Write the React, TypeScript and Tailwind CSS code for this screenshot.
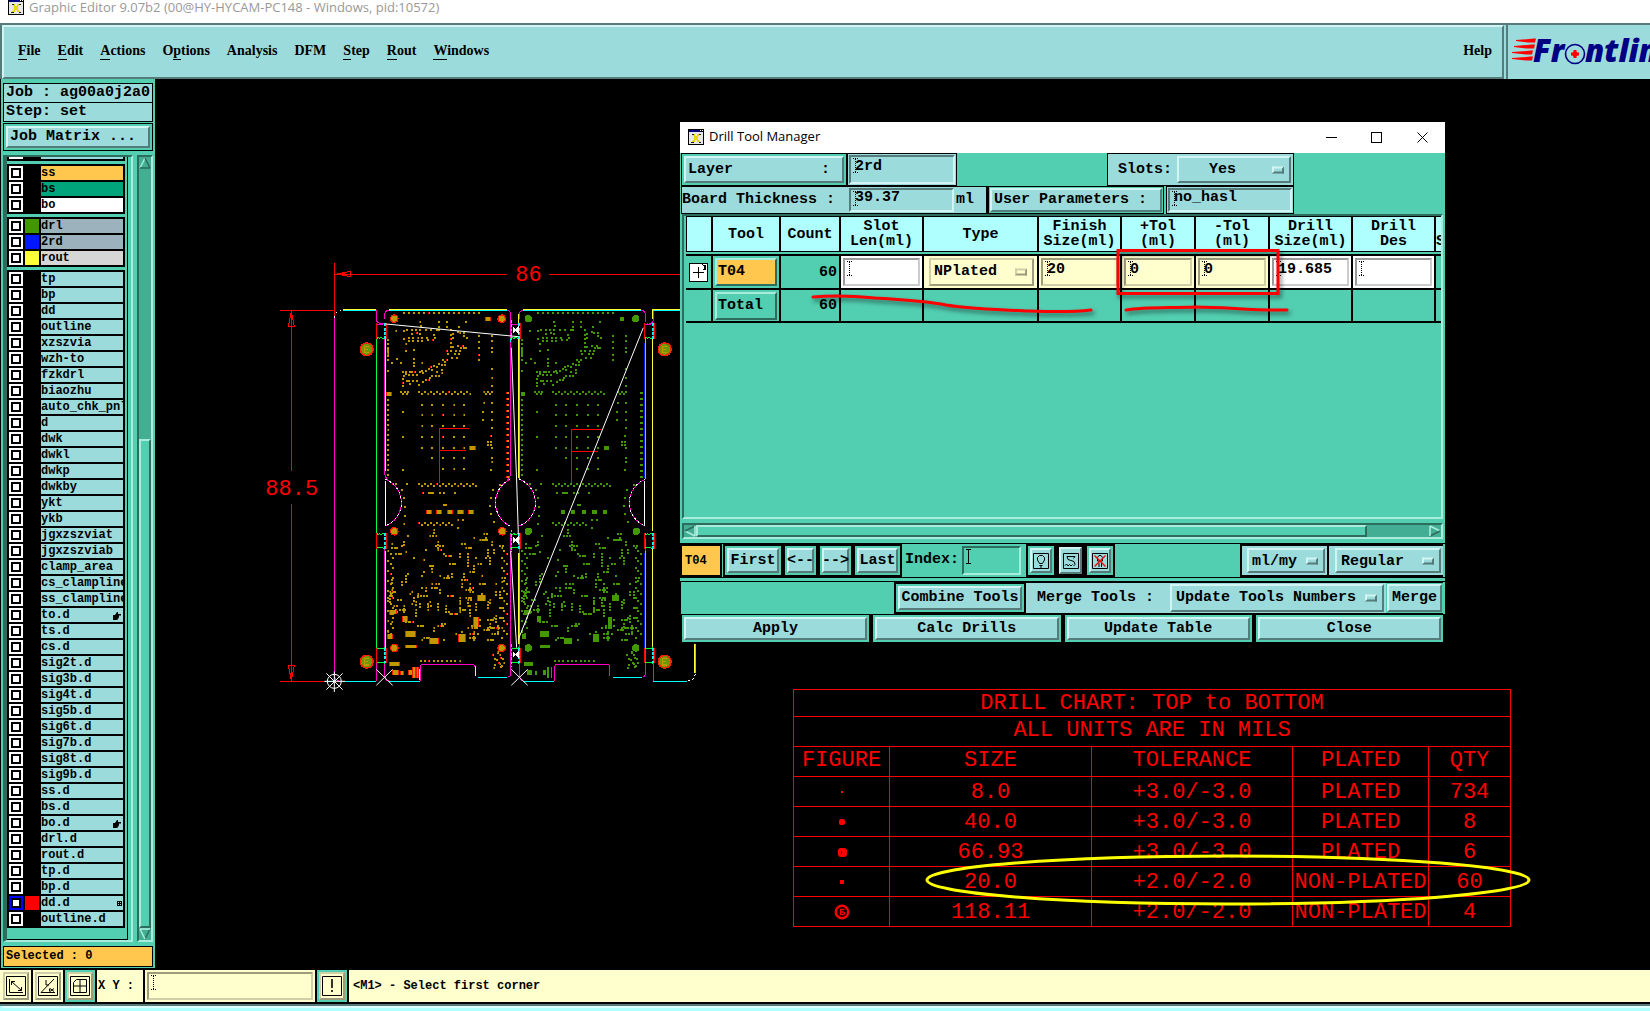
import React from "react";

const MONO = "font-['Liberation_Mono',monospace] font-bold";
const RAISED =
  "border-2 border-t-[#d2f4f4] border-l-[#d2f4f4] border-r-[#557b7b] border-b-[#557b7b] bg-[#9cdbdb]";
const SUNKEN =
  "border-2 border-t-[#557b7b] border-l-[#557b7b] border-r-[#d2f4f4] border-b-[#d2f4f4] bg-[#9cdbdb]";
const RAISED_TEAL =
  "border-2 border-t-[#a9ecdb] border-l-[#a9ecdb] border-r-[#2c6d5d] border-b-[#2c6d5d]";
const SUNKEN_TEAL =
  "border-2 border-t-[#2c6d5d] border-l-[#2c6d5d] border-r-[#a9ecdb] border-b-[#a9ecdb]";
const SUNKEN_CREAM =
  "border-2 border-t-[#9c9c7c] border-l-[#9c9c7c] border-r-[#cfcfa8] border-b-[#cfcfa8] bg-[#ffffce]";
const RAISED_CREAM =
  "border-2 border-t-[#cfcfa8] border-l-[#cfcfa8] border-r-[#9c9c7c] border-b-[#9c9c7c] bg-[#ffffce]";
const SUNKEN_WHITE =
  "border-2 border-t-[#9a9a9a] border-l-[#9a9a9a] border-r-[#cccccc] border-b-[#cccccc] bg-white";

function WindowIcon() {
  return (
    <svg width="16" height="16" viewBox="0 0 16 16" shapeRendering="crispEdges" className="shrink-0">
      <rect width="16" height="16" fill="#000" />
      <rect x="1" y="1" width="10" height="2" fill="#000084" />
      <rect x="12" y="1" width="1" height="1" fill="#fff" />
      <rect x="14" y="1" width="1" height="1" fill="#fff" />
      <rect x="1" y="3" width="14" height="12" fill="#e8e8e8" />
      <path d="M5 5l6 8M11 5l-6 8" stroke="#e8d800" strokeWidth="2" />
      <path d="M4 5.500h2M11 5.500h2M3 13.500h3M11 13.500h2" stroke="#222" strokeWidth="1" />
    </svg>
  );
}

function Caret({ solid = false }: { solid?: boolean }) {
  return (
    <svg
      width="5"
      height="15"
      viewBox="0 0 5 15"
      shapeRendering="crispEdges"
      className="pointer-events-none absolute left-1 top-[3px]"
    >
      <path d="M0 .5h5M0 14.5h5" stroke="#000" strokeDasharray={solid ? "5" : "1 1"} />
      <path d="M2.5 1v13" stroke="#000" strokeDasharray={solid ? "13" : "1 1"} />
    </svg>
  );
}

function Field({
  label,
  value = "",
  bevel,
  className = "",
  solid,
}: {
  label: string;
  value?: string;
  bevel: string;
  className?: string;
  solid?: boolean;
}) {
  return (
    <span className={`relative block ${className}`}>
      <input
        aria-label={label}
        defaultValue={value}
        className={`${bevel} ${MONO} block h-full w-full pb-[6px] pl-[4px] text-[15px] leading-4 outline-none`}
      />
      <Caret solid={solid} />
    </span>
  );
}

function Option({
  label,
  value,
  bevel = RAISED,
  className = "",
  pad = "pl-[6px]",
  cream = false,
}: {
  label: string;
  value: string;
  bevel?: string;
  className?: string;
  pad?: string;
  cream?: boolean;
}) {
  return (
    <span className={`relative block ${className}`}>
      <select
        aria-label={label}
        defaultValue={value}
        className={`${bevel} ${pad} ${MONO} block h-full w-full appearance-none pt-px text-[15px] outline-none`}
      >
        <option>{value}</option>
      </select>
      <span
        className={`${cream ? RAISED_CREAM : RAISED} pointer-events-none absolute right-[7px] top-1/2 h-[7px] w-[12px] -translate-y-1/2`}
      />
    </span>
  );
}

function PushButton({
  children,
  className = "",
  label,
}: {
  children: React.ReactNode;
  className?: string;
  label?: string;
}) {
  return (
    <span className={`block border-2 border-black bg-[#52ceb0] p-[2px] ${className}`}>
      <button
        type="button"
        aria-label={label}
        className={`${RAISED} ${MONO} flex h-full w-full items-center justify-center whitespace-pre pt-px text-[15px]`}
      >
        {children}
      </button>
    </span>
  );
}

const MENUS: [string, number][] = [
  ["File", 0],
  ["Edit", 0],
  ["Actions", 0],
  ["Options", 1],
  ["Analysis", -1],
  ["DFM", -1],
  ["Step", 0],
  ["Rout", 0],
  ["Windows", 0],
];

function MenuLabel({ text, at }: { text: string; at: number }) {
  if (at < 0) return <>{text}</>;
  return (
    <>
      {text.slice(0, at)}
      <span className="border-b border-black pb-px">{text[at]}</span>
      {text.slice(at + 1)}
    </>
  );
}

function Logo() {
  return (
    <svg width="144" height="48" viewBox="0 0 144 48" className="block overflow-hidden">
      <g fill="#ff0000">
        <path d="M8 15l13-1 5-.5h2l-1 4h-7l-12-1.500z" />
        <path d="M6 21l13-1 5-.5h3l-1 4h-7l-13-1.500z" />
        <path d="M4 27l14-1 5-.5h2l-1 4h-6l-14-1.500z" />
        <path d="M4 33l14-1 4-.5h3l-1 4h-6l-14-1.500z" />
      </g>
      <g
        fill="#000084"
        fontFamily="Open Sans, Liberation Sans, sans-serif"
        fontWeight="800"
        fontStyle="italic"
        fontSize="31"
      >
        <text x="25" y="37">
          Fr
        </text>
        <text x="77" y="37">
          ntline
        </text>
      </g>
      <circle cx="67" cy="29" r="9.5" fill="#9cdbdb" stroke="#000084" strokeWidth="1.600" />
      <path d="M67 25v8M63 29h8" stroke="#f00" strokeWidth="3" />
      <circle cx="67" cy="29" r="2.600" fill="#f00" />
    </svg>
  );
}

type Layer = { name: string; bg?: string; swatch?: string; mark?: "hand" | "grid"; active?: boolean };

const GROUP_A: Layer[] = [
  { name: "ss", bg: "bg-[#ffc74e]" },
  { name: "bs", bg: "bg-[#00a57b]" },
  { name: "bo", bg: "bg-white" },
];
const GROUP_B: Layer[] = [
  { name: "drl", bg: "bg-[#9cb3bd]", swatch: "bg-[#429800]" },
  { name: "2rd", bg: "bg-[#9cb3bd]", swatch: "bg-[#0018ff]" },
  { name: "rout", bg: "bg-[#d6d6d6]", swatch: "bg-[#ffff39]" },
];
const GROUP_C: Layer[] = [
  ..."tp bp dd outline xzszvia wzh-to fzkdrl biaozhu auto_chk_pnl d dwk dwkl dwkp dwkby ykt ykb jgxzszviat jgxzszviab clamp_area cs_clampline ss_clampline"
    .split(" ")
    .map((name) => ({ name })),
  { name: "to.d", mark: "hand" },
  ..."ts.d cs.d sig2t.d sig3b.d sig4t.d sig5b.d sig6t.d sig7b.d sig8t.d sig9b.d ss.d bs.d"
    .split(" ")
    .map((name) => ({ name })),
  { name: "bo.d", mark: "hand" },
  ..."drl.d rout.d tp.d bp.d".split(" ").map((name) => ({ name })),
  { name: "dd.d", mark: "grid", swatch: "bg-[#ff0000]", active: true },
  { name: "outline.d" },
];

function LayerRow({ layer }: { layer: Layer }) {
  return (
    <label className="flex h-[14px] gap-[2px]">
      <span
        className={`flex h-[14px] w-[14px] shrink-0 items-center justify-center ${layer.active ? "bg-[#0000ff]" : "bg-white"}`}
      >
        <input
          type="checkbox"
          className="block h-[10px] w-[10px] appearance-none border-2 border-black bg-white"
        />
      </span>
      <span className={`w-[14px] shrink-0 ${layer.swatch ?? ""}`} />
      <span
        className={`${MONO} relative min-w-0 flex-1 overflow-hidden whitespace-nowrap text-[12px] leading-[14px] ${layer.bg ?? "bg-[#9cdbdb]"}`}
      >
        {layer.name}
        {layer.mark === "hand" && (
          <svg width="8" height="8" viewBox="0 0 8 8" className="absolute right-[2px] top-1">
            <path d="M0 3h2l2-3h1v2h3v1.500H6V5l-1 2-1 1H0z" />
          </svg>
        )}
        {layer.mark === "grid" && (
          <svg
            width="5"
            height="5"
            viewBox="0 0 5 5"
            shapeRendering="crispEdges"
            className="absolute right-[1px] top-[5px]"
          >
            <path d="M.5.5h4v4h-4zM2.5 0v5M0 2.5h5" fill="none" stroke="#000" />
          </svg>
        )}
      </span>
    </label>
  );
}

function LayerGroup({ layers }: { layers: Layer[] }) {
  return (
    <div className="flex flex-col gap-[2px] border-2 border-black bg-black">
      {layers.map((l) => (
        <LayerRow key={l.name} layer={l} />
      ))}
    </div>
  );
}

function Arrow({ dir }: { dir: "up" | "down" | "left" | "right" }) {
  const turn = { up: 0, right: 90, down: 180, left: 270 }[dir];
  return (
    <svg width="12" height="12" viewBox="0 0 12 12" className="block shrink-0">
      <g transform={`rotate(${turn} 6 6)`} fill="none" strokeWidth="1.6">
        <path d="M1 11L6 1" stroke={dir === "down" ? "#2c6d5d" : "#a9ecdb"} />
        <path d="M6 1l5 10" stroke={dir === "down" ? "#a9ecdb" : "#2c6d5d"} />
        <path d="M1 11h10" stroke={dir === "up" ? "#2c6d5d" : "#a9ecdb"} />
      </g>
    </svg>
  );
}

function Sidebar() {
  return (
    <aside className="ml-px flex w-[154px] shrink-0 flex-col bg-[#52ceb0] pb-px pl-[2px] pr-[2px] pt-1">
      <div className={`${MONO} border border-black bg-[#9cdbdb] text-[15px]`}>
        <div className="h-[18px] overflow-hidden whitespace-pre pl-[2px] leading-[18px]">Job : ag00a0j2a0</div>
        <div className="h-[19px] whitespace-pre border-t border-black pl-[2px] leading-[18px]">Step: set</div>
      </div>
      <div className="mt-px border border-black p-[2px]">
        <button
          type="button"
          className={`${RAISED} ${MONO} block h-[22px] w-full whitespace-pre pl-[2px] text-left text-[15px] leading-[18px]`}
        >
          Job Matrix ...
        </button>
      </div>
      <div className="mt-1 flex">
        <div className="flex w-[130px] border-2 border-l-4 border-b-[#a9ecdb] border-l-[#2c6d5d] border-r-[#a9ecdb] border-t-[#2c6d5d] pr-[3px]">
          <div className="flex min-w-0 flex-1 flex-col gap-[3px] border-b border-r border-black pb-[11px] pr-[2px]">
            <div className="flex h-1 gap-[2px] border-2 border-t-0 border-black bg-black">
              <span className="w-[14px] bg-white" />
              <span className="w-[14px]" />
              <span className="flex-1 bg-[#9cdbdb]" />
            </div>
            <LayerGroup layers={GROUP_A} />
            <LayerGroup layers={GROUP_B} />
            <LayerGroup layers={GROUP_C} />
          </div>
        </div>
        <div className={`${SUNKEN_TEAL} ml-1 flex w-4 flex-col items-center bg-[#44ae95]`}>
          <Arrow dir="up" />
          <div className="h-[270px]" />
          <div className={`${RAISED_TEAL} w-full flex-1 bg-[#52ceb0]`} />
          <Arrow dir="down" />
        </div>
      </div>
      <div
        className={`${MONO} mt-1 h-[21px] whitespace-pre border border-black bg-[#ffc74e] pl-[2px] text-[12px] leading-[18px]`}
      >
        Selected : 0
      </div>
    </aside>
  );
}

/* Board artwork: coordinates are in thirds of a pixel. */
type Dot = [number, number, number?, number?, boolean?];

function span(from: number, to: number, step: number, fn: (v: number, i: number) => Dot): Dot[] {
  const out: Dot[] = [];
  for (let v = from, i = 0; v <= to; v += step, i++) out.push(fn(v, i));
  return out;
}

const LOOSE =
  "480,212 537,212 561,212 617,212 482,226 537,228 560,228 408,240 433,239 442,237 457,237 469,237 481,237 497,237 470,247 457,249 481,248 433,265 446,270 446,262 460,262 474,262 487,262 500,262 460,270 474,270 487,270 504,268 520,268 523,252 526,262 538,238 530,238 512,238 596,228 600,245 611,245 611,255 594,242 573,238 573,252 579,250 573,264 579,262 573,276 573,288 579,288 594,284 602,290 608,286 617,290 620,260 611,292 588,300 600,300 596,308 562,300 572,300 564,308 585,310 577,320 590,320 548,328 560,328 554,334 538,340 546,342 554,343 522,345 530,348 514,348 506,354 516,356 498,360 486,360 490,367 546,358 545,366 532,364 528,374 538,376 517,376 510,382 498,388 506,388 490,394 477,402 430,363 438,363 449,363 455,362 464,363 432,374 438,370 446,372 458,372 470,372 430,384 430,395 440,390 448,390 460,390 472,390 450,398 430,405 438,278 438,300 463,297 463,325 463,335 463,345 479,363 485,335 411,325 424,335 397,336 656,256 656,274 656,290 656,311 656,328 697,254 697,270 697,290 697,302 697,355 697,380 697,405 384,267 384,280 384,292 384,298 384,304 384,310 384,316 384,328 384,360 430,482 430,558 430,656 671,457 697,457 669,483 669,507 697,483 697,507 697,531 692,555 684,573 692,573 684,582 692,582 697,590 697,620 697,632 692,656 517,621 549,621 582,621 613,621 549,654 582,654 613,654 423,423 428,429 434,423 440,429 445,423 672,423 677,429 683,423 689,429 697,423 551,761 559,761 594,807 610,807 408,700 425,716 433,740 436,768 434,795 432,818 720,702 700,716 692,740 690,766 694,790 702,812 488,726 506,726 512,726 518,726 540,726 551,726 584,726 398,700 440,700";

function buildDots(): Dot[] {
  const dots: Dot[] = LOOSE.split(" ").map((p) => {
    const [x, y] = p.split(",").map(Number);
    return [x, y];
  });
  dots.push(...span(432, 665, 15, (x) => [x, 186]));
  dots.push(...span(477, 630, 9, (x, i) => [x, i % 2 ? 429 : 423]));
  dots.push(...span(448, 680, 15, (y) => [384, y]));
  dots.push(...span(426, 680, 18, (y) => [741, y, 8, 6, true]));
  for (const y of [462, 493, 525, 558, 590])
    for (const x of [486, 517, 549, 582, 613]) dots.push([x, y, 6, 6, y === 493]);
  dots.push(...span(477, 648, 9, (x, i) => [x, i % 2 ? 705 : 699]));
  dots.push(...span(477, 580, 9, (x, i) => [x, i % 2 ? 821 : 815]));
  dots.push(...span(482, 610, 13, (x) => [x, 1230]));
  let s = 7;
  const next = () => (s = (s * 16807) % 2147483647) / 2147483647;
  for (let i = 0; i < 165; i++) {
    const x = 384 + Math.round(next() * 58) * 6;
    const y = 832 + Math.round(next() * 56) * 6;
    const n = 1 + Math.floor(next() * 3);
    const flat = next() > 0.45;
    const hot = next() > 0.6;
    if (y < 870 && (x < 425 || x > 690)) continue;
    if (y > 1160 && (x < 425 || x > 690)) continue;
    for (let k = 0; k < n; k++)
      dots.push([Math.min(x + (flat ? k * 8 : 0), 742), y + (flat ? 0 : k * 9), 6, 6, hot && k === 0]);
  }
  for (let i = 0; i < 26; i++) dots.push([384 + (i % 3) * 8, 900 + i * 10]);
  for (let i = 0; i < 28; i++) dots.push([726 + (i % 3) * 7, 890 + i * 10, 6, 6, i % 4 === 0]);
  for (let i = 0; i < 16; i++)
    dots.push([686 + Math.round(next() * 50), 1204 + Math.round(next() * 48), 6, 6, i % 2 === 0]);
  return dots;
}

const DOTS = buildDots();
const PADS: [number, number, number, number][] = [
  [684, 204, 14, 14],
  [387, 429, 14, 14],
  [638, 592, 14, 12],
  [507, 783, 13, 14],
  [537, 783, 13, 14],
  [570, 783, 13, 14],
  [601, 783, 13, 14],
  [633, 783, 13, 14],
  [665, 1040, 20, 18],
  [400, 1083, 18, 10],
  [435, 1103, 14, 18],
  [648, 1112, 11, 30],
  [390, 1157, 14, 14],
  [452, 1149, 26, 18],
  [522, 1170, 26, 16],
  [605, 1160, 18, 24],
  [454, 1187, 30, 10],
  [404, 1239, 26, 10],
  [406, 1265, 14, 16],
  [426, 1266, 6, 12],
  [452, 1265, 8, 14],
  [463, 1265, 6, 34],
  [472, 1265, 5, 34],
];
const HOLES: [number, number][] = [
  [403, 203],
  [725, 203],
  [403, 841],
  [727, 841],
  [403, 1191],
  [725, 1191],
];

function Components({ plain, dx }: { plain?: boolean; dx: number }) {
  const base = plain ? "#429800" : "#c09800";
  return (
    <g transform={`translate(${dx} 0)`}>
      {DOTS.map(([x, y, w = 6, h = 6, hot], i) => (
        <g key={i}>
          <rect x={x - 3} y={y - 3} width={w} height={h} fill={base} />
          {!plain && (hot || i % 7 === 0) && <rect x={x - 3} y={y - 3} width="3" height={h} fill="#ff0000" />}
        </g>
      ))}
      {PADS.map(([x, y, w, h], i) => (
        <g key={i}>
          {!plain && <rect x={x - w / 2 - 3} y={y - h / 2} width={w + 6} height={h} fill="#ff1800" />}
          <rect x={x - w / 2} y={y - h / 2} width={w} height={h} fill={base} />
        </g>
      ))}
      {HOLES.map(([x, y], i) => (
        <circle
          key={i}
          cx={x}
          cy={y}
          r="11"
          fill={base}
          stroke={plain ? base : "#ff1800"}
          strokeWidth={plain ? 0 : 4}
        />
      ))}
    </g>
  );
}

function Tab({ x, y, bow }: { x: number; y: number; bow?: boolean }) {
  return (
    <g fill="none" strokeWidth="3">
      <path d={`M${x} ${y}q4 6 10 2q4 4 16-2`} stroke={y < 300 ? "#ff00c8" : "#00ff39"} />
      <path d={`M${x} ${y + 47}q4-6 10-2q4-4 16 2`} stroke="#00ff39" />
      <path d={`M${x + 1} ${y}v47M${x + 29} ${y}v47`} stroke="#ff0000" />
      <path d={`M${x + 25} ${y}v47`} stroke="#00ffff" strokeWidth="5" strokeDasharray="9 4" />
      <path d={`M${x + 27} ${y + 4}v40`} stroke="#00ff39" strokeWidth="4" strokeDasharray="5 8" />
      {bow && (
        <>
          <path d={`M${x + 2} ${y - 10}v67`} stroke="#00ffff" strokeWidth="5" strokeDasharray="8 5" />
          <path d={`M${x + 7} ${y + 13}l15 15v-15l-15 15z`} fill="#fff" stroke="#fff" />
        </>
      )}
    </g>
  );
}

function BoardDrawing() {
  return (
    <svg
      viewBox="0 0 1350 1350"
      className="absolute left-[105px] top-[172px] h-[450px] w-[450px]"
      fill="none"
      strokeWidth="3"
      shapeRendering="crispEdges"
      role="img"
      aria-label="Panel layout"
    >
      <g stroke="#ff0000">
        <path d="M223 36V195M223 70H741M867 70H1260M60 178H219M94 178V660M94 760V1290M60 1291H195" />
        <path d="M232 69l40-8v16z M85 227l9-45 9 45z M85 1243l9 45 9-45z" />
        <path d="M232 69l22-4v8zM91 200l3-18 4 18zM91 1266l3 22 4-22z" fill="#f00" />
        <path d="M538 692V532H627M538 598H618M538 660V696M935 698V535H1027M935 601H1014" />
      </g>
      <g
        fill="#ff0000"
        stroke="none"
        fontFamily="Liberation Mono, monospace"
        fontSize="66"
        shapeRendering="auto"
      >
        <text x="766" y="90">
          86
        </text>
        <text x="16" y="732">
          88.5
        </text>
      </g>

      <Components dx={0} />
      <Components dx={402} plain />

      <g stroke="#ff00c8">
        <path d="M223 195V1270q0 20 20 21M349 178V205q0 10 12 12h12M349 1180V1290M374 1240V1270q0 20 14 20" />
        <path d="M374 265V660q0 20 10 27M752 190V660q0 20-10 27M752 845V1270q0 8-8 8M374 890V1190M778 845V1270q0 20 12 20" />
        <path d="M374 205v-12q0-14 12-16M740 177q12 2 12 16M778 205v-12q0-14 12-16M1144 177q12 2 12 16v20M1180 178v25q0 14-14 14" />
        <path d="M376 685A75 75 0 0 1 376 825M750 685A78 78 0 0 0 750 825M778 685A75 75 0 0 1 778 825M1156 685A75 75 0 0 0 1156 825" />
        <path d="M481 1290V1250q0-10 8-10H636q9 0 9 9V1275M884 1290V1250q0-10 8-10H1040q9 0 9 9V1275M1156 860V1268q0 8-8 10M1180 1200V1290" />
      </g>
      <path
        d="M376 685A75 75 0 0 1 376 825M750 685A78 78 0 0 0 750 825M778 685A75 75 0 0 1 778 825M1156 685A75 75 0 0 0 1156 825M223 200q2-20 22-22M1284 1290q20 0 22-24"
        stroke="#fff"
        strokeDasharray="5 9"
      />
      <g stroke="#ffff39">
        <path d="M249 175H349M386 175H740M790 175H1144M1180 175H1260M775 265V680M775 905V1180M1178 175V205M1178 265V840M1178 890V1190M478 1255V1288M646 1245V1275M1303 1180V1265M775 190V215" />
      </g>
      <g stroke="#00ffff">
        <path d="M249 178H349M386 178H740M790 178H1144M1180 178H1260M249 1290H349M388 1290H480M655 1278H740M790 1290H882M1058 1278H1145M1180 1290H1282M195 1291H223" />
        <path d="M778 265V685M778 905V1180M1156 265V685M1156 900V1190M752 262v10M1306 1180v85" />
      </g>
      <path d="M1153 275V680M1153 905V1190" stroke="#0018ff" />
      <path d="M377 265V660M376 690V825M1153 690V825M377 900V1190" stroke="#fff" />
      <path d="M349 265V850M349 895V1190" stroke="#00ff39" />
      <path d="M1181 217V265M1181 845V895M1181 1190V1240" stroke="#ff0000" />

      {[217, 846, 1190].map((y) => (
        <g key={y}>
          <Tab x={349} y={y} />
          <Tab x={752} y={y} bow />
          <Tab x={1153} y={y} />
        </g>
      ))}

      <g stroke="#fff" shapeRendering="auto" strokeWidth="3">
        <path d="M378 219L775 257M754 290L770 690L775 850M752 900L770 1190M1150 230L775 1165" />
        <circle cx="223" cy="1291" r="21" />
        <path d="M223 1261v62M193 1291h62M199 1267l49 49M248 1267l-49 49M349 1255l49 48M398 1255l-49 48M754 1255l49 48M803 1255l-49 48" />
      </g>

      {[
        [320, 295],
        [1214, 295],
        [320, 1232],
        [1214, 1232],
      ].map(([x, y]) => (
        <g key={`${x}-${y}`}>
          <circle cx={x} cy={y} r="19" fill="#6f9800" stroke="#ff2000" strokeWidth="5" />
          <path
            d={`M${x + 7} ${y - 9}h-13v19h13M${x - 6} ${y}h10`}
            stroke="#c09800"
            strokeWidth="4"
          />
        </g>
      ))}
    </svg>
  );
}

const CHART = [
  ["8.0", "+3.0/-3.0", "PLATED", "734"],
  ["40.0", "+3.0/-3.0", "PLATED", "8"],
  ["66.93", "+3.0/-3.0", "PLATED", "6"],
  ["20.0", "+2.0/-2.0", "NON-PLATED", "60"],
  ["118.11", "+2.0/-2.0", "NON-PLATED", "4"],
];

function Figure({ kind }: { kind: number }) {
  return (
    <svg width="16" height="16" viewBox="0 0 16 16" className="mx-auto block" fill="#f00">
      {kind === 0 && <rect x="7" y="7" width="2" height="2" />}
      {kind === 1 && <rect x="5" y="5" width="6" height="6" rx="2" />}
      {kind === 2 && (
        <>
          <rect x="4" y="4" width="9" height="9" rx="3" />
          <path d="M7.500 7v3" stroke="#000" />
        </>
      )}
      {kind === 3 && <rect x="6" y="6" width="4" height="4" />}
      {kind === 4 && (
        <>
          <circle cx="8" cy="8" r="6.200" fill="none" stroke="#f00" strokeWidth="2.400" />
          <path d="M10.500 5.500h-4v5h4M6.500 8h3.500M10.500 8v2" fill="none" stroke="#f00" strokeWidth="1.300" />
        </>
      )}
    </svg>
  );
}

const CHART_CELL = "h-[30px] border border-[#f00] p-0 text-center font-normal leading-none";

function DrillChart() {
  return (
    <div className="absolute left-[638px] top-[610px] w-[718px]">
      <table className="w-full table-fixed border-collapse whitespace-nowrap font-['Liberation_Mono',monospace] text-[22px] text-[#f00]">
        <colgroup>
          <col className="w-[96px]" />
          <col className="w-[202px]" />
          <col className="w-[201px]" />
          <col className="w-[136px]" />
          <col />
        </colgroup>
        <thead>
          <tr>
            <th colSpan={5} className="h-[27px] border border-[#f00] p-0 pt-px font-normal leading-none">
              DRILL CHART: TOP to BOTTOM
            </th>
          </tr>
          <tr>
            <th colSpan={5} className={`${CHART_CELL} pb-[2px]`}>
              ALL UNITS ARE IN MILS
            </th>
          </tr>
          <tr>
            {["FIGURE", "SIZE", "TOLERANCE", "PLATED", "QTY"].map((h) => (
              <th key={h} className={`${CHART_CELL} pb-[2px]`}>
                {h}
              </th>
            ))}
          </tr>
        </thead>
        <tbody>
          {CHART.map((row, i) => (
            <tr key={i}>
              <td className={CHART_CELL}>
                <Figure kind={i} />
              </td>
              {row.map((c, j) => (
                <td key={j} className={`${CHART_CELL} pt-[2px]`}>
                  {c}
                </td>
              ))}
            </tr>
          ))}
        </tbody>
      </table>
      <svg
        width="610"
        height="60"
        viewBox="0 0 610 60"
        fill="none"
        className="pointer-events-none absolute left-[131px] top-[161px]"
      >
        <ellipse cx="304" cy="30" rx="301" ry="24" stroke="#ffff00" strokeWidth="3" />
      </svg>
    </div>
  );
}

const HEADERS = [
  "",
  "Tool",
  "Count",
  "Slot\nLen(ml)",
  "Type",
  "Finish\nSize(ml)",
  "+Tol\n(ml)",
  "-Tol\n(ml)",
  "Drill\nSize(ml)",
  "Drill\nDes",
  "\nS",
];
const TD = "border-b-2 border-r-2 border-black p-0";

function ToolTable() {
  return (
    <table className={`${MONO} w-full table-fixed border-separate border-spacing-0 text-[15px]`}>
      <colgroup>
        <col className="w-[27px]" />
        <col className="w-[68px]" />
        <col className="w-[60px]" />
        <col className="w-[83px]" />
        <col className="w-[115px]" />
        <col className="w-[83px]" />
        <col className="w-[74px]" />
        <col className="w-[74px]" />
        <col className="w-[83px]" />
        <col className="w-[83px]" />
        <col />
      </colgroup>
      <thead>
        <tr>
          {HEADERS.map((h, i) => (
            <th
              key={i}
              className={`h-[36px] overflow-hidden whitespace-pre border-y border-black bg-[#b0ffff] p-0 leading-[15px] ${i < 10 ? "border-r-2" : ""} ${i === 0 ? "border-l" : ""}`}
            >
              {h}
            </th>
          ))}
        </tr>
        <tr aria-hidden="true">
          <td colSpan={11} className="h-1 border-b-2 border-black p-0 leading-none" />
        </tr>
      </thead>
      <tbody>
        <tr className="h-[34px]">
          <td className={TD}>
            <button type="button" aria-label="Expand tool" className="mx-auto block">
              <svg width="19" height="19" viewBox="0 0 19 19" shapeRendering="crispEdges">
                <path
                  d="M.5.5h18v18H.5zM4 9.500h11M9.500 4v11M13.500 0v2M13.500 2.500h3v4h-3M15.500 2v4"
                  fill="#fff"
                  stroke="#000"
                />
              </svg>
            </button>
          </td>
          <td className={TD}>
            <button
              type="button"
              className={`${RAISED_TEAL} mx-auto block h-[28px] w-[62px] bg-[#ffc74e] pl-px pt-px text-left`}
            >
              T04
            </button>
          </td>
          <td className={`${TD} pr-[2px] pt-[2px] text-right`}>60</td>
          <td className={`${TD} bg-white`}>
            <Field label="Slot length" bevel={SUNKEN_WHITE} className="mx-[2px] h-[28px]" />
          </td>
          <td className={`${TD} bg-[#ffffce]`}>
            <Option
              label="Type"
              value="NPlated"
              bevel={RAISED_CREAM}
              cream
              pad="pl-[3px]"
              className="ml-[5px] mr-[3px] h-[28px]"
            />
          </td>
          <td className={`${TD} bg-[#ffffce]`}>
            <Field label="Finish size" value="20" bevel={SUNKEN_CREAM} className="mx-[2px] h-[28px]" />
          </td>
          <td className={`${TD} bg-[#ffffce]`}>
            <Field label="Plus tolerance" value="0" bevel={SUNKEN_CREAM} className="mx-[2px] h-[28px]" />
          </td>
          <td className={`${TD} bg-[#ffffce]`}>
            <Field label="Minus tolerance" value="0" bevel={SUNKEN_CREAM} className="mx-[2px] h-[28px]" />
          </td>
          <td className={`${TD} bg-white`}>
            <Field label="Drill size" value="19.685" bevel={SUNKEN_WHITE} className="mx-[2px] h-[28px]" />
          </td>
          <td className={`${TD} bg-white`}>
            <Field label="Drill designator" bevel={SUNKEN_WHITE} className="mx-[2px] h-[28px]" />
          </td>
          <td className="border-b-2 border-black p-0" />
        </tr>
        <tr className="h-[33px]">
          <td className={TD} />
          <td className={TD}>
            <button
              type="button"
              className={`${RAISED_TEAL} mx-auto block h-[28px] w-[62px] pl-px pt-px text-left`}
            >
              Total
            </button>
          </td>
          <td className={`${TD} pr-[2px] pt-[2px] text-right`}>60</td>
          {[3, 4, 5, 6, 7, 8, 9].map((i) => (
            <td key={i} className={TD} />
          ))}
          <td className="border-b-2 border-black p-0" />
        </tr>
      </tbody>
    </table>
  );
}

function DrillToolManager() {
  return (
    <section
      aria-label="Drill Tool Manager"
      className={`${MONO} absolute left-[525px] top-[43px] w-[765px] bg-[#52ceb0] text-[15px] text-black`}
    >
      <header className="flex h-[31px] items-center bg-white pb-px pl-2 font-['Open_Sans',sans-serif] text-[13px] font-normal">
        <WindowIcon />
        <h2 className="ml-[5px] flex-1">Drill Tool Manager</h2>
        <button type="button" aria-label="Minimize" className="flex w-[45px] justify-center">
          <svg width="11" height="11" viewBox="0 0 11 11" shapeRendering="crispEdges">
            <path d="M0 5.500h11" stroke="#000" />
          </svg>
        </button>
        <button type="button" aria-label="Maximize" className="flex w-[45px] justify-center">
          <svg width="11" height="11" viewBox="0 0 11 11" shapeRendering="crispEdges">
            <path d="M.5.5h10v10H.5z" fill="none" stroke="#000" />
          </svg>
        </button>
        <button type="button" aria-label="Close window" className="flex w-[46px] justify-center">
          <svg width="11" height="11" viewBox="0 0 11 11">
            <path d="M.5.5l10 10M10.500.5l-10 10" stroke="#000" />
          </svg>
        </button>
      </header>

      <div className="flex h-[33px] pl-px">
        <span className="block w-[166px] border border-black p-[2px]">
          <button
            type="button"
            className={`${RAISED} flex h-full w-full items-center justify-between pl-[2px] pr-[12px] pt-px`}
          >
            <span>Layer</span>
            <span>:</span>
          </button>
        </span>
        <span className="block w-[110px] border border-black bg-[#9cdbdb] p-px">
          <Field label="Layer" value="2rd" bevel={SUNKEN} className="h-full" />
        </span>
        <span className="flex-1" />
        <span className="flex w-[187px] border border-black bg-[#9cdbdb] p-[2px]">
          <span className="flex w-[67px] items-center pl-2 pt-px">Slots:</span>
          <Option label="Slots" value="Yes" pad="pl-[30px]" className="flex-1" />
        </span>
        <span className="w-[151px]" />
      </div>

      <div className="flex h-[28px] pl-px">
        <label className="flex w-[306px] items-center border border-black bg-[#9cdbdb] p-px pl-0">
          <span className="w-[167px] whitespace-pre">Board Thickness :</span>
          <Field label="Board thickness" value="39.37" bevel={SUNKEN} className="h-full w-[105px]" />
          <span className="pl-[2px]">ml</span>
        </label>
        <span className="block w-[177px] border border-l-2 border-black p-px">
          <button type="button" className={`${RAISED} flex h-full w-full items-center whitespace-pre pl-[2px]`}>
            User Parameters :
          </button>
        </span>
        <span className="ml-[2px] block w-[128px] border border-black bg-[#9cdbdb] p-px">
          <Field label="User parameters" value="no_hasl" bevel={SUNKEN} className="h-full" />
        </span>
      </div>

      <div className={`${SUNKEN_TEAL} ml-[2px] mr-[2px] h-[305px] overflow-hidden pl-[2px]`}>
        <ToolTable />
      </div>

      <div className={`${SUNKEN_TEAL} mx-[2px] my-1 flex h-4 items-center bg-[#44ae95]`}>
        <Arrow dir="left" />
        <div className={`${RAISED_TEAL} h-full w-[671px] bg-[#52ceb0]`} />
        <div className="flex-1" />
        <Arrow dir="right" />
      </div>

      <div className="flex h-[35px] border-y border-black">
        <span className="flex w-[42px] items-center border-2 border-black bg-[#ffc74e] pl-[3px] text-[12px]">
          T04
        </span>
        <PushButton className="ml-px w-[60px]">First</PushButton>
        <PushButton className="w-[35px]">{"<--"}</PushButton>
        <PushButton className="w-[35px]">{"-->"}</PushButton>
        <PushButton className="w-[49px]">Last</PushButton>
        <label className="flex w-[124px] items-center pl-[3px]">
          <span className="w-[57px]">Index:</span>
          <Field
            label="Index"
            bevel={`${SUNKEN_TEAL} bg-[#52ceb0]`}
            className="h-[29px] w-[59px]"
            solid
          />
        </label>
        <PushButton label="Highlight" className="w-[30px]">
          <svg width="16" height="16" viewBox="0 0 16 16" className="shrink-0" fill="none" stroke="#000">
            <path d="M.5.5h15v15H.5zM6.500 10.500L4.500 7V4.500l2-2h3l2 2V7l-2 3.500zM6.500 12.500h3M7 14h2" />
          </svg>
        </PushButton>
        <span className="block w-[29px] border-[3px] border-black">
          <button type="button" aria-label="Path" className={`${RAISED} flex h-full w-full items-center justify-center`}>
            <svg width="16" height="16" viewBox="0 0 16 16" className="shrink-0" fill="none" stroke="#000">
              <path d="M.5.5h15v15H.5zM4 3.500h8l-1.500 2M4 3.500l1 3 6 2 1 3-1.500 1.500M2 12.500l1.500-1.500 1.500 2 1.500-1.500 1.500 1.500 1.500-1.500" />
            </svg>
          </button>
        </span>
        <PushButton label="Clear highlight" className="w-[30px]">
          <svg width="16" height="16" viewBox="0 0 16 16" className="shrink-0" fill="none" stroke="#000">
            <path d="M.5.5h15v15H.5zM5.500 8V4.500l1.500-2h2l1.500 2V8zM7 10v4M9.500 10v4" />
            <path d="M2.500 2.500l11 11M13.500 2.500l-11 11" stroke="#f00" strokeWidth="1.400" />
          </svg>
        </PushButton>
        <span className="min-w-0 flex-1" />
        <span className="block w-[89px] border-2 border-black bg-[#9cdbdb] py-[2px] pl-[5px] pr-[2px]">
          <Option label="Units" value="ml/my" pad="pl-[3px]" className="h-full" />
        </span>
        <span className="mr-[2px] block w-[114px] border-y-2 border-black bg-[#9cdbdb] py-[2px] pl-[6px] pr-[2px]">
          <Option label="Table mode" value="Regular" pad="pl-[4px]" className="h-full" />
        </span>
      </div>

      <div className="mt-[3px] flex h-[34px] border-y border-black">
        <span className="flex-1 border-l border-black" />
        <PushButton className="w-[132px]">Combine Tools</PushButton>
        <span className="flex w-[360px] items-center border-y border-black bg-[#9cdbdb] py-px pr-[2px]">
          <span className="flex-1 whitespace-pre pl-[11px] pt-px">Merge Tools :</span>
          <Option label="Merge tools" value="Update Tools Numbers" pad="pl-[4px]" className="h-[28px] w-[214px]" />
        </span>
        <span className="mr-[2px] block w-[57px] border-y border-black p-px">
          <button type="button" className={`${RAISED} flex h-full w-full items-center justify-center pt-px`}>
            Merge
          </button>
        </span>
      </div>

      <div className="grid h-[29px] grid-cols-4">
        {["Apply", "Calc Drills", "Update Table", "Close"].map((t) => (
          <PushButton key={t} className="h-[29px] border-t-0">
            {t}
          </PushButton>
        ))}
      </div>

      <svg
        width="500"
        height="90"
        viewBox="0 0 500 90"
        fill="none"
        stroke="#ff0000"
        strokeWidth="3"
        strokeLinecap="round"
        className="pointer-events-none absolute left-[125px] top-[119px] drop-shadow-[2px_3px_2px_rgba(0,0,0,0.5)]"
      >
        <path d="M313 9.500h160v43H313z" />
        <path d="M8 56C30 54 50 55 70 57C100 59 120 60 141 64C165 68 200 69 225 70C250 71 270 71 286 69" />
        <path d="M321 69C340 66 360 67 390 66C420 66 450 70 482 69" />
      </svg>
    </section>
  );
}

function IconButton({
  label,
  on,
  children,
}: {
  label: string;
  on?: boolean;
  children: React.ReactNode;
}) {
  return (
    <span className={`block h-full w-[32px] border-r-2 border-black p-[2px] ${on ? "bg-[#52ceb0]" : "bg-[#ffffce]"}`}>
      <button
        type="button"
        aria-label={label}
        className={`${RAISED_CREAM} flex h-full w-full items-center justify-center`}
      >
        <svg width="20" height="20" viewBox="0 0 20 20" className="shrink-0" fill="none" stroke="#000">
          <path d="M.5.5h19v19H.5z" />
          {children}
        </svg>
      </button>
    </span>
  );
}

function StatusBar() {
  return (
    <footer className={`${MONO} flex h-[36px] border-y-2 border-black bg-[#ffffce] pl-px text-[12px]`}>
      <IconButton label="Snap to point">
        <path d="M3.500 3v13.500H17M5.500 5.500l10 9M5.500 9V5.500H9M15.500 11v3.500H12" />
      </IconButton>
      <IconButton label="Snap to angle">
        <path d="M3 16.500h14M3 16.500L16 3M8 4v5h3M12 12.500l4 3M16 12.500l-4 3M11.500 12.500v3" />
      </IconButton>
      <IconButton label="Grid" on>
        <path d="M3.500 16.500v-10l3-3h10v13zM3.500 10h13M10 3.500v13" />
      </IconButton>
      <label className="flex items-center">
        <span className="w-[46px] whitespace-pre pl-px">X Y :</span>
        <span className="block h-full border-x-2 border-black p-[2px]">
          <Field label="Coordinates" bevel={SUNKEN_CREAM} className="h-full w-[166px]" />
        </span>
      </label>
      <IconButton label="Warnings" on>
        <path d="M10 3v9M10 14v2" strokeWidth="1.600" />
      </IconButton>
      <p className="flex items-center pl-1">{"<M1> - Select first corner"}</p>
    </footer>
  );
}

export default function App() {
  return (
    <div className="flex min-h-screen w-full flex-col overflow-hidden bg-black text-black">
      <header className="flex h-[23px] items-start bg-white pl-2 font-['Open_Sans',sans-serif] text-[13px] leading-[15px] text-[#999]">
        <span className="-mt-px block">
          <WindowIcon />
        </span>
        <h1 className="ml-[5px] whitespace-nowrap">
          Graphic Editor 9.07b2 (00@HY-HYCAM-PC148 - Windows, pid:10572)
        </h1>
      </header>

      <div className="flex h-[56px] border-l-2 border-t-2 border-[#557b7b] bg-[#9cdbdb]">
        <nav
          className={`${RAISED} flex min-w-0 flex-1 items-center gap-[17px] pb-[4px] pl-[14px] pr-[10px] font-['Liberation_Serif',serif] text-[14px] font-bold`}
        >
          {MENUS.map(([text, at]) => (
            <button type="button" key={text}>
              <MenuLabel text={text} at={at} />
            </button>
          ))}
          <button type="button" className="ml-auto">
            Help
          </button>
        </nav>
        <div className="ml-[2px] w-[144px] shrink-0 overflow-hidden border-l-2 border-[#557b7b]">
          <Logo />
        </div>
      </div>

      <div className="flex">
        <Sidebar />
        <main className="relative min-w-0 flex-1 overflow-hidden bg-black">
          <BoardDrawing />
          <DrillChart />
          <DrillToolManager />
        </main>
      </div>

      <StatusBar />
      <div className="min-h-2 flex-1 border-t-2 border-[#557b7b] bg-[#b0ffff]">
        <div className="ml-[2px] h-full border-l-2 border-t-2 border-[#e0ffff]" />
      </div>
    </div>
  );
}
